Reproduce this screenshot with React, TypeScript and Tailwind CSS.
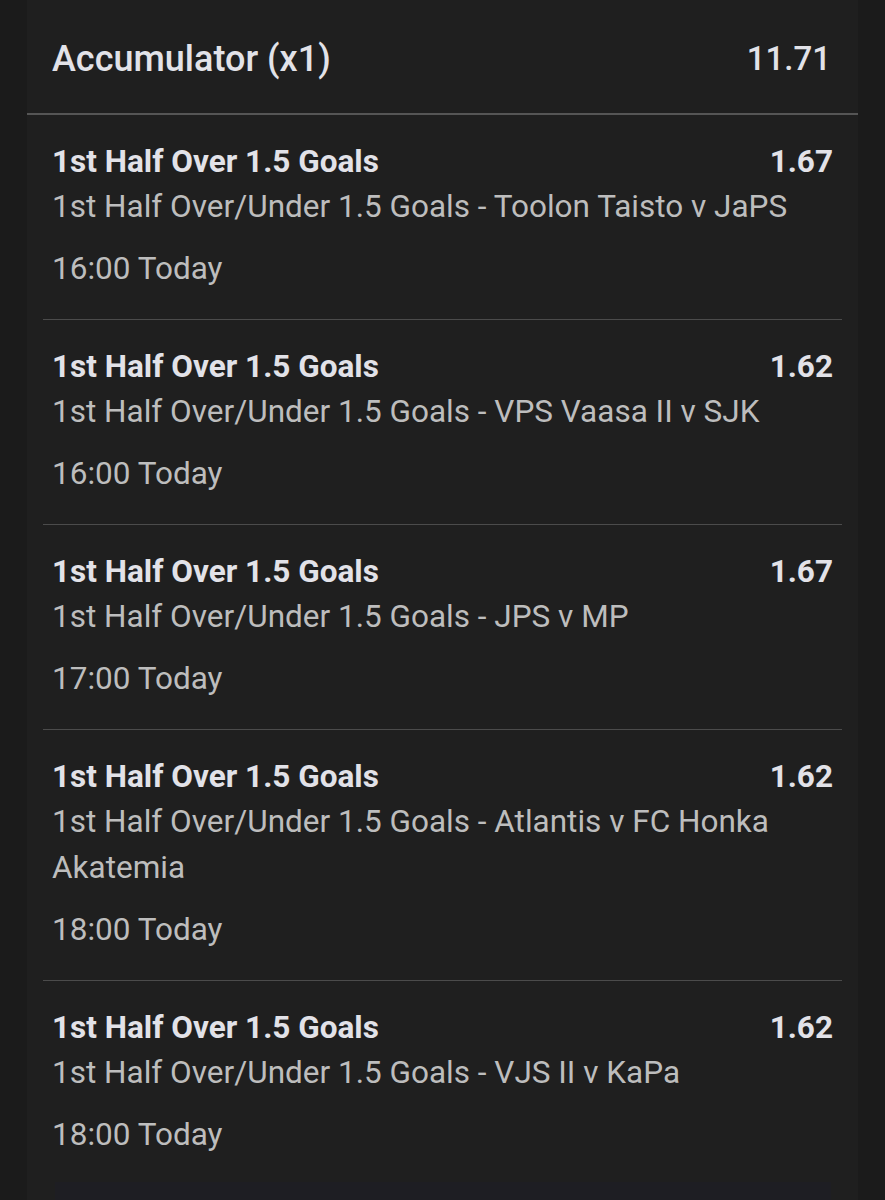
const bets = [
  { odds: "1.67", event: "Toolon Taisto v JaPS", time: "16:00 Today" },
  { odds: "1.62", event: "VPS Vaasa II v SJK", time: "16:00 Today" },
  { odds: "1.67", event: "JPS v MP", time: "17:00 Today" },
  { odds: "1.62", event: "Atlantis v FC Honka Akatemia", time: "18:00 Today" },
  { odds: "1.62", event: "VJS II v KaPa", time: "18:00 Today" },
];

function BetRow({ odds, event, time }: { odds: string; event: string; time: string }) {
  return (
    <div className="mx-4 border-b border-[#4b4b4b] px-[9px] pb-[27px] pt-[25px] last:border-b-0 last:pb-[24px]">
      <div className="flex h-[44px] items-center justify-between text-[31.5px] font-bold text-[#e2e2e8]">
        <span>1st Half Over 1.5 Goals</span>
        <span>{odds}</span>
      </div>
      <div className="text-[31.5px] leading-[46px] text-[#bdbdbd]">
        1st Half Over/Under 1.5 Goals - {event}
      </div>
      <div className="mt-[16px] text-[31.5px] leading-[46px] text-[#bdbdbd]">{time}</div>
    </div>
  );
}

export default function App() {
  return (
    <div
      className="min-h-[1200px] bg-[#1b1b1b] px-[27px]"
      style={{ fontFamily: "Roboto, 'Noto Sans', sans-serif" }}
    >
      <div className="min-h-[1200px] bg-[#1f1f1f]">
        <div className="flex h-[115px] items-center justify-between border-b-2 border-[#555555] pb-[2px] pl-[25px] pr-[27px] pt-[6px] font-medium text-[#e2e2e8]">
          <span className="text-[36px]">Accumulator (x1)</span>
          <span className="text-[33px]">11.71</span>
        </div>
        <div>
          {bets.map((b, i) => (
            <BetRow key={i} {...b} />
          ))}
        </div>
        <div className="ml-[28px] mr-[27px] h-10 bg-[#1e1e23]" />
      </div>
    </div>
  );
}
